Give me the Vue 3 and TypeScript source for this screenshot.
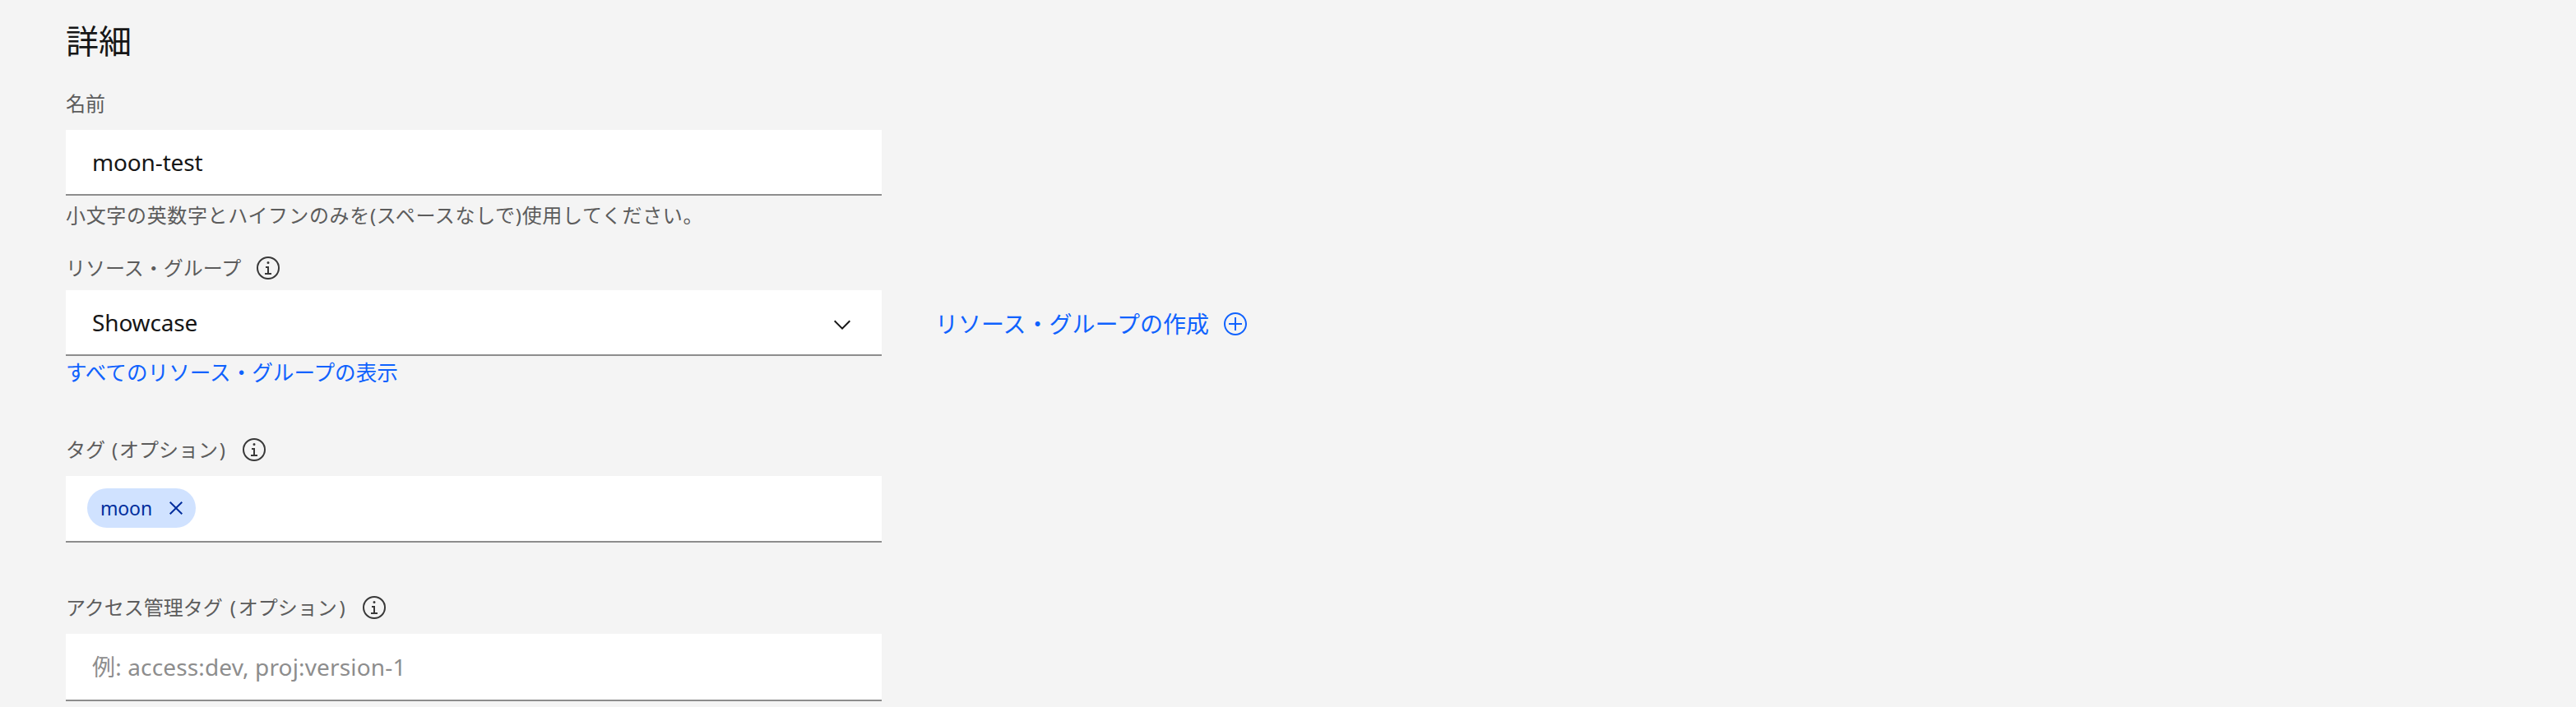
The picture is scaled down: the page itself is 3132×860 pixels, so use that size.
<script setup lang="ts">
const infoPath =
  'M17 22v-8h-4v2h2v6h-3v2h8v-2h-3z M16 8a1.5 1.5 0 1 0 1.5 1.5A1.5 1.5 0 0 0 16 8z M16 30a14 14 0 1 1 14-14 14 14 0 0 1-14 14zm0-26a12 12 0 1 0 12 12A12 12 0 0 0 16 4z'
</script>

<template>
  <main class="page">
    <h2 class="title">詳細</h2>

    <section class="name-block">
      <div class="label">名前</div>
      <input class="control" value="moon-test" readonly />
      <p class="helper">小文字の英数字とハイフンのみを(スペースなしで)使用してください。</p>
    </section>

    <section class="group-block">
      <div class="label">
        <span>リソース・グループ</span>
        <svg class="info" viewBox="0 0 32 32"><path :d="infoPath" /></svg>
      </div>
      <div class="group-row">
        <div class="control select">
          <span>Showcase</span>
          <svg class="chevron" viewBox="0 0 32 32"><path d="M16 22L6 12l1.4-1.4 8.6 8.6 8.6-8.6L26 12z" /></svg>
        </div>
        <a class="create">
          <span>リソース・グループの作成</span>
          <svg class="add" viewBox="0 0 32 32">
            <path d="M16 4c6.6 0 12 5.4 12 12s-5.4 12-12 12S4 22.6 4 16 9.4 4 16 4m0-2C8.3 2 2 8.3 2 16s6.3 14 14 14 14-6.3 14-14S23.7 2 16 2z" />
            <path d="M24 15h-7V8h-2v7H8v2h7v7h2v-7h7z" />
          </svg>
        </a>
      </div>
      <a class="view-all">すべてのリソース・グループの表示</a>
    </section>

    <section class="tags-block">
      <div class="label">
        <span>タグ <span class="paren">(</span>オプション<span class="paren">)</span></span>
        <svg class="info" viewBox="0 0 32 32"><path :d="infoPath" /></svg>
      </div>
      <div class="control tags">
        <span class="tag">
          <span>moon</span>
          <svg class="close" viewBox="0 0 32 32"><path d="M24 9.4L22.6 8 16 14.6 9.4 8 8 9.4 14.6 16 8 22.6 9.4 24 16 17.4 22.6 24 24 22.6 17.4 16 24 9.4z" /></svg>
        </span>
      </div>
    </section>

    <section class="access-block">
      <div class="label">
        <span>アクセス管理タグ <span class="paren">(</span>オプション<span class="paren">)</span></span>
        <svg class="info" viewBox="0 0 32 32"><path :d="infoPath" /></svg>
      </div>
      <input class="control" placeholder="例: access:dev, proj:version-1" readonly />
    </section>
  </main>
</template>

<style scoped>
.page {
  box-sizing: border-box;
  width: 3132px;
  height: 860px;
  overflow: hidden;
  padding: 30px 0 0 80px;
  background: #f4f4f4;
  color: #161616;
  font-family: "Noto Sans", "Noto Sans CJK JP", sans-serif;
  font-weight: 400;
}
.title {
  margin: 0;
  font-size: 40px;
  line-height: 40px;
  font-weight: 400;
}
.label {
  display: flex;
  align-items: center;
  gap: 17px;
  height: 32px;
  font-size: 24px;
  line-height: 32px;
  color: #5c5c5c;
}
.tags-block .paren {
  margin: 0 1.75px;
}
.access-block .paren {
  margin: 0 2.75px;
}
.info {
  width: 32px;
  height: 32px;
  fill: #393939;
}
.control {
  display: block;
  box-sizing: border-box;
  width: 992px;
  height: 80px;
  padding: 0 32px;
  border: 0;
  border-bottom: 2px solid #8d8d8d;
  border-radius: 0;
  outline: none;
  background: #fff;
  color: #161616;
  font: inherit;
  font-size: 28px;
  letter-spacing: -0.15px;
}
.control::placeholder {
  color: #8d8d8d;
  opacity: 1;
  letter-spacing: 0.15px;
}
.name-block {
  margin-top: 40px;
}
.name-block .label {
  margin-bottom: 16px;
}
.helper {
  margin: 8px 0 0;
  font-size: 24px;
  line-height: 32px;
  color: #5c5c5c;
  letter-spacing: 0.66px;
}
.group-block {
  margin-top: 32px;
}
.group-block .label {
  margin-bottom: 11px;
}
.group-row {
  display: flex;
  align-items: center;
}
.select {
  display: flex;
  align-items: center;
  justify-content: space-between;
}
.chevron {
  width: 32px;
  height: 32px;
  margin-top: 6px;
  fill: #161616;
}
.create {
  display: flex;
  align-items: center;
  gap: 16px;
  margin-left: 65px;
  margin-top: 2px;
  font-size: 28px;
  line-height: 40px;
  color: #0f62fe;
}
.add {
  width: 32px;
  height: 32px;
  fill: #0f62fe;
}
.view-all {
  display: block;
  margin-top: 5px;
  font-size: 25.6px;
  line-height: 32px;
  color: #0f62fe;
}
.tags-block {
  margin-top: 61px;
}
.tags-block .label {
  margin-bottom: 16px;
}
.tags {
  display: flex;
  align-items: center;
  height: 81px;
  padding: 0 0 1px 26px;
}
.tag {
  display: flex;
  align-items: center;
  justify-content: space-between;
  box-sizing: border-box;
  width: 132px;
  height: 48px;
  padding: 0 8px 0 16px;
  border-radius: 24px;
  background: #d0e2ff;
  color: #002d9c;
  font-size: 23px;
  font-weight: 400;
}
.close {
  width: 32px;
  height: 32px;
  fill: #002d9c;
}
.access-block {
  margin-top: 63px;
}
.access-block .label {
  margin-bottom: 16px;
}
.access-block .control {
  height: 82px;
}
</style>

<style>
html,
body {
  margin: 0;
  background: #f4f4f4;
}
</style>
